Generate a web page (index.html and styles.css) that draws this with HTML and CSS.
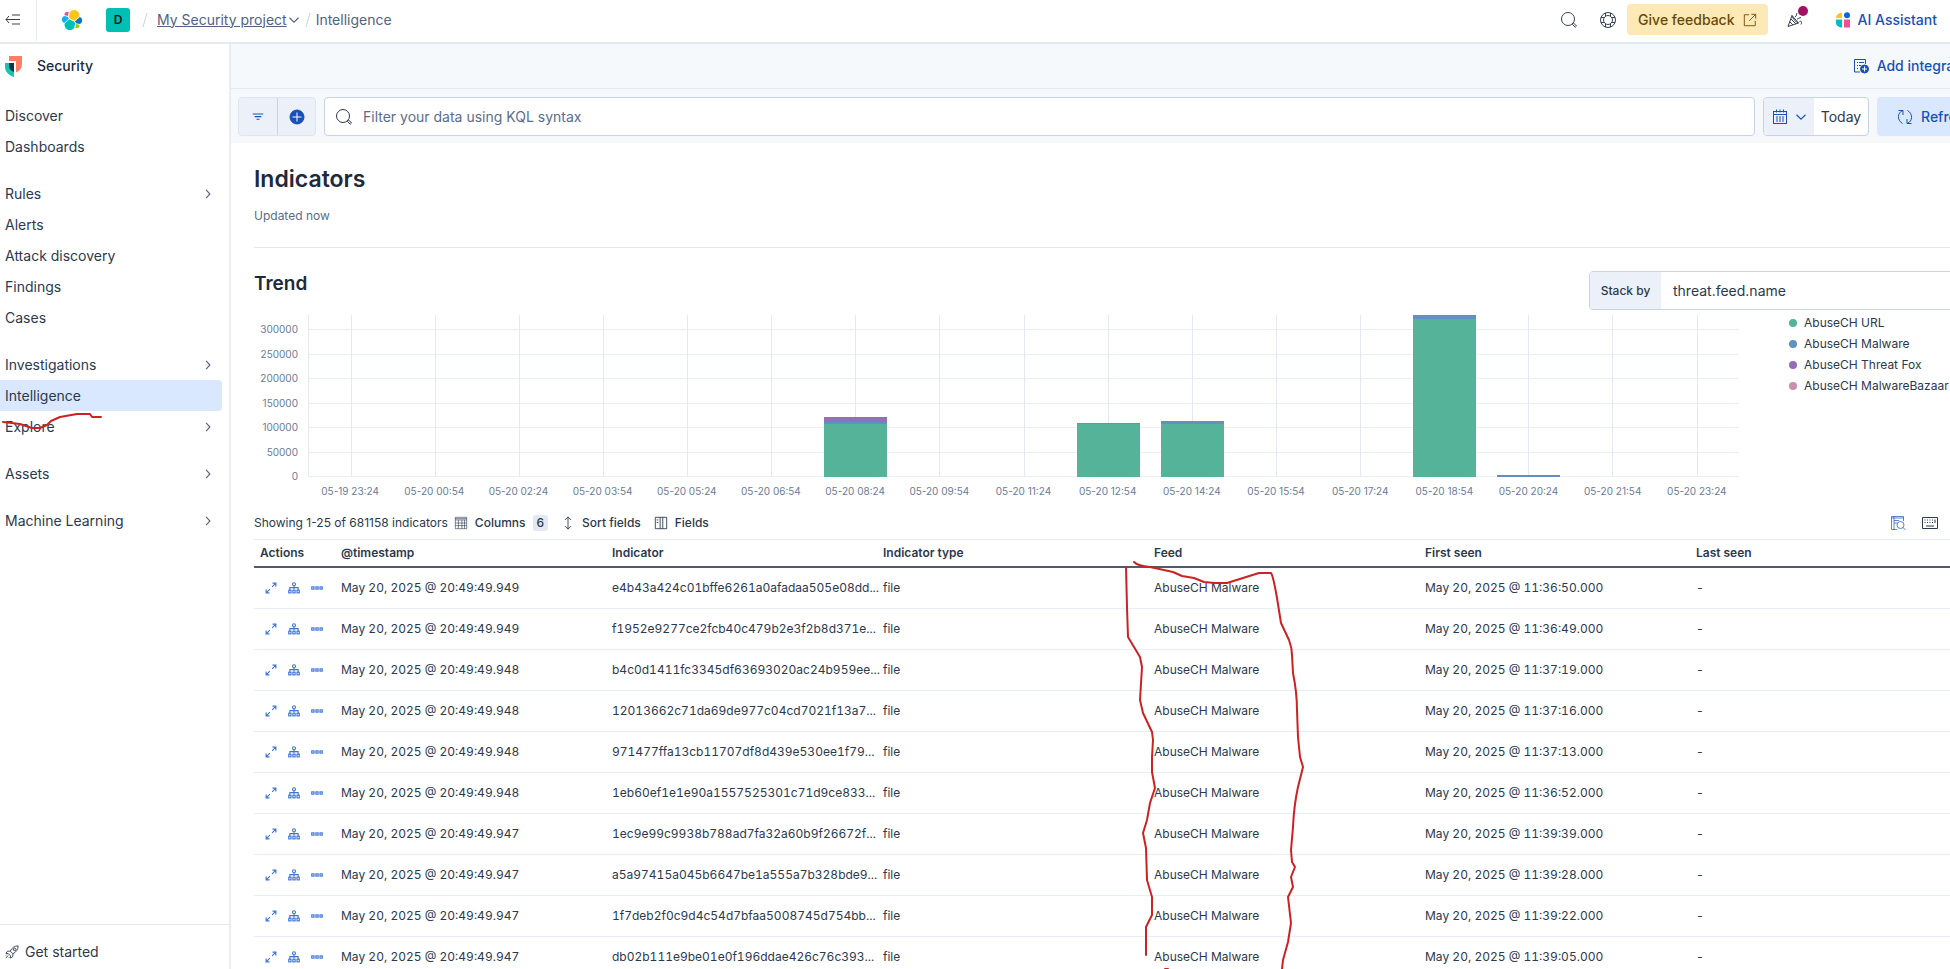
FILE: index.html
```html
<!DOCTYPE html>
<html lang="en">
<head>
    <meta charset="UTF-8">
    <meta name="viewport" content="width=device-width, initial-scale=1.0">
    <title>Indicators - Intelligence</title>
    <link rel="stylesheet" href="styles.css">
</head>
<body>

    <!-- Shared icons -->
    <svg class="sprite" aria-hidden="true">
        <symbol id="i-right" viewBox="0 0 16 16"><path d="M5.500 2.500l5 5.500-5 5.500"/></symbol>
        <symbol id="i-down" viewBox="0 0 16 16"><path d="M2 5l6 6 6-6"/></symbol>
        <symbol id="i-search" viewBox="0 0 16 16"><circle cx="7" cy="7" r="6.500"/><path d="M11.500 11.500l1-.5 3 3-1.200 1.200-2.900-2.800z"/></symbol>
        <symbol id="i-expand" viewBox="0 0 16 16"><path d="M9.500 6.500l5-5M10 1.500h4.500V6M6.500 9.500l-5 5M1.500 10v4.500H6"/></symbol>
        <symbol id="i-tree" viewBox="0 0 16 16"><circle cx="8" cy="3" r="2"/><path d="M8 5v5M2.500 10.500v-3h11v3"/><rect x="1" y="11" width="3" height="3.500"/><rect x="6.500" y="11" width="3" height="3.500"/><rect x="12" y="11" width="3" height="3.500"/></symbol>
        <symbol id="i-dots" viewBox="0 0 16 16"><rect x="1" y="6.500" width="3" height="3"/><rect x="6.500" y="6.500" width="3" height="3"/><rect x="12" y="6.500" width="3" height="3"/></symbol>
    </svg>

    <header class="header">
        <button class="icon-btn nav-toggle" aria-label="Collapse navigation">
            <svg viewBox="0 0 16 16" class="icon"><path d="M4 4L1 7.500 4 11M1 7.500h14M7 3h8M7 12h8"/></svg>
        </button>
        <a href="#" class="logo" aria-label="Elastic home">
            <svg viewBox="0 0 32 32">
                <path fill="#FEC514" d="M12.580 13.787l7.002 3.211 7.066-6.213a7.849 7.849 0 0 0 .152-1.557c0-4.287-3.464-7.775-7.722-7.775a7.687 7.687 0 0 0-6.366 3.381l-1.176 6.140z"/>
                <path fill="#00BFB3" d="M5.333 21.228a7.960 7.960 0 0 0-.151 1.572c0 4.300 3.475 7.799 7.747 7.799 2.572 0 4.975-1.285 6.423-3.436l1.166-6.116-1.556-2.995-7.030-3.223z"/>
                <path fill="#F04E98" d="M5.288 9.067l4.800 1.143L11.140 4.720a3.784 3.784 0 0 0-2.282-.768c-2.080 0-3.773 1.705-3.773 3.800 0 .464.082.907.203 1.315z"/>
                <path fill="#1BA9F5" d="M4.871 10.215c-2.145.716-3.624 2.773-3.624 5.054 0 2.221 1.360 4.204 3.403 4.990l6.734-6.130-1.236-2.661z"/>
                <path fill="#93C90E" d="M20.873 27.163a3.765 3.765 0 0 0 2.274.776c2.080 0 3.773-1.706 3.773-3.800 0-.461-.080-.905-.203-1.314l-4.797-1.130z"/>
                <path fill="#0077CC" d="M21.848 20.563l5.280 1.245c2.146-.715 3.625-2.773 3.625-5.055 0-2.216-1.363-4.196-3.408-4.982l-6.905 6.090z"/>
            </svg>
        </a>
        <button class="avatar" aria-label="Default space">D</button>
        <nav class="breadcrumbs" aria-label="Breadcrumb">
            <svg viewBox="0 0 6 16" class="slash"><path d="M5 1L1 15"/></svg>
            <a href="#">My Security project</a>
            <svg class="icon icon-s crumb-arrow"><use href="#i-down"/></svg>
            <svg viewBox="0 0 6 16" class="slash"><path d="M5 1L1 15"/></svg>
            <span>Intelligence</span>
        </nav>
        <div class="header-right">
            <button class="icon-btn" aria-label="Search"><svg class="icon"><use href="#i-search"/></svg></button>
            <button class="icon-btn" aria-label="Help">
                <svg viewBox="0 0 16 16" class="icon"><circle cx="8" cy="8" r="7.500"/><circle cx="8" cy="8" r="4.500"/><path d="M5.500 1v3.200M10.500 1v3.200M5.500 11.800V15M10.500 11.800V15M1 5.500h3.200M1 10.500h3.200M11.800 5.500H15M11.800 10.500H15"/></svg>
            </button>
            <a href="#" class="feedback">Give feedback
                <svg viewBox="0 0 16 16" class="icon icon-m"><path d="M7 2H1.500v12.500H14V9M9.500 1.500h5v5M14.500 1.500L7 9"/></svg>
            </a>
            <button class="icon-btn news" aria-label="What's new">
                <svg viewBox="0 0 16 16" class="icon"><path d="M5 3.500L1 14.500l10.500-3.500zM4 7l5 5M3 10l3 3M5 3.500c.5 3 3 6 6.500 7.500M8 5c2-1 1-2.500 2-4M10 7.500c1.500-2 2.500-1 4-2M12.500 9.500c2-1 2.500 1 1.500 3"/></svg>
                <span class="dot"></span>
            </button>
            <button class="ai-btn">
                <svg viewBox="0 0 14 16" class="ai-icon"><path fill="#FEC514" d="M6 1v5H0c0-3 2.500-5 6-5z"/><circle cx="11" cy="3.300" r="3" fill="#0B64DD"/><path fill="#00BFB3" d="M0 7.500h6v8c-4 0-6-2.500-6-4.500z"/><rect x="8" y="7.500" width="6" height="8" fill="#F04E98"/></svg>
                AI Assistant
            </button>
        </div>
    </header>

    <div class="layout">
        <aside class="sidebar">
            <a href="#" class="solution">
                <svg viewBox="0 0 17 21"><path fill="#FF7E62" d="M4 0h13v8c0 4-2 7-6 8.500V5H4z"/><path fill="#16C5B0" d="M0 7h9v14C3 19 0 15 0 11z"/><path fill="#163251" d="M4 7h5v9c-3-1-5-3-5-6z"/></svg>
                Security
            </a>
            <nav class="nav" aria-label="Security">
                <ul>
                    <li><a href="#">Discover</a></li>
                    <li><a href="#">Dashboards</a></li>
                </ul>
                <ul>
                    <li><a href="#">Rules <svg class="icon icon-s"><use href="#i-right"/></svg></a></li>
                    <li><a href="#">Alerts</a></li>
                    <li><a href="#">Attack discovery</a></li>
                    <li><a href="#">Findings</a></li>
                    <li><a href="#">Cases</a></li>
                </ul>
                <ul>
                    <li><a href="#">Investigations <svg class="icon icon-s"><use href="#i-right"/></svg></a></li>
                    <li><a href="#" class="active" aria-current="page">Intelligence</a></li>
                    <li><a href="#">Explore <svg class="icon icon-s"><use href="#i-right"/></svg></a></li>
                </ul>
                <ul>
                    <li><a href="#">Assets <svg class="icon icon-s"><use href="#i-right"/></svg></a></li>
                </ul>
                <ul>
                    <li><a href="#">Machine Learning <svg class="icon icon-s"><use href="#i-right"/></svg></a></li>
                </ul>
            </nav>
            <a href="#" class="get-started">
                <svg viewBox="0 0 16 16" class="icon icon-m"><path d="M15 1c-4 0-7 2-9 6l3 3c4-2 6-5 6-9zM6 7H3L1 9.500l3 .5M9 10v3l-2.500 2-.5-3M4 10l2 2M3.500 12l-2.500 3M10 5l1 1M1 12l1-1M4 15l1-1"/><circle cx="11" cy="5" r="1.500"/></svg>
                Get started
            </a>
        </aside>

        <main class="main">
            <div class="page">
                <div class="topbar">
                    <a href="#" class="add-link">
                        <svg viewBox="0 0 16 16" class="icon"><path d="M7 14H1.500V1.500h11V6M4 4.500h1M6 4.500h5M4 7.500h1M6 7.500h2M4 10.500h1"/><circle cx="11.500" cy="11" r="4" class="solid"/><path class="plus" d="M11.500 8.500v5M9 11h5"/></svg>
                        Add integrations
                    </a>
                </div>

                <div class="query-bar">
                    <div class="filter-group">
                        <button aria-label="Saved queries"><svg viewBox="0 0 16 16" class="icon icon-s"><path d="M1 4h14M3.500 7.500h9M6 11h4"/></svg></button>
                        <button aria-label="Add filter"><svg viewBox="0 0 16 16" class="icon"><circle cx="8" cy="8" r="7" class="solid"/><path class="plus" d="M8 3.500v9M3.500 8h9"/></svg></button>
                    </div>
                    <label class="search">
                        <svg class="icon"><use href="#i-search"/></svg>
                        <input type="text" placeholder="Filter your data using KQL syntax" aria-label="Filter your data using KQL syntax">
                    </label>
                    <div class="date-picker">
                        <button class="quick" aria-label="Date quick select">
                            <svg viewBox="0 0 16 16" class="icon"><rect x="1.500" y="2.500" width="13" height="12"/><path d="M1.500 5.500h13M4.500 .5v3M8 .5v3M11.500 .5v3M4 8h2M7 8h2M10 8h2M4 10h2M7 10h2M10 10h2M4 12h2M7 12h2M10 12h2"/></svg>
                            <svg class="icon icon-s"><use href="#i-down"/></svg>
                        </button>
                        <button class="today">Today</button>
                    </div>
                    <button class="refresh">
                        <svg viewBox="0 0 16 16" class="icon"><path d="M6 1.500c-6 2-6 10-.5 13M1.500 1.500H6V6M10 14.500c6-2 6-10 .5-13M14.500 14.500H10V10"/></svg>
                        Refresh
                    </button>
                </div>

                <div class="content">
                    <h1>Indicators</h1>
                    <p class="updated">Updated now</p>

                    <section class="trend">
                        <div class="trend-head">
                            <h2>Trend</h2>
                            <div class="stack-by">
                                <label for="stack">Stack by</label>
                                <select id="stack"><option>threat.feed.name</option></select>
                                <svg class="icon icon-s"><use href="#i-down"/></svg>
                            </div>
                        </div>

                        <div class="chart">
                            <div class="y-axis">
                                <span>300000</span><span>250000</span><span>200000</span><span>150000</span><span>100000</span><span>50000</span><span>0</span>
                            </div>
                            <div class="plot-wrap">
                                <div class="plot">
                                    <div class="grid-lines"><i></i><i></i><i></i><i></i><i></i><i></i><i></i></div>
                                    <div class="slot"></div>
                                    <div class="slot"></div>
                                    <div class="slot"></div>
                                    <div class="slot"></div>
                                    <div class="slot"></div>
                                    <div class="slot"></div>
                                    <div class="slot"><b class="fox" style="height:3.1%"></b><b class="malware" style="height:1%"></b><b class="url" style="height:32.8%"></b></div>
                                    <div class="slot"></div>
                                    <div class="slot"></div>
                                    <div class="slot"><b class="malware" style="height:0.4%"></b><b class="url" style="height:32.9%"></b></div>
                                    <div class="slot"><b class="malware" style="height:2.2%"></b><b class="url" style="height:32.5%"></b></div>
                                    <div class="slot"></div>
                                    <div class="slot"></div>
                                    <div class="slot"><b class="malware" style="height:2.5%"></b><b class="url" style="height:97.5%"></b></div>
                                    <div class="slot"><b class="malware" style="height:1.3%"></b></div>
                                    <div class="slot"></div>
                                    <div class="slot"></div>
                                </div>
                                <div class="x-axis">
                                    <span>05-19 23:24</span><span>05-20 00:54</span><span>05-20 02:24</span><span>05-20 03:54</span><span>05-20 05:24</span><span>05-20 06:54</span><span>05-20 08:24</span><span>05-20 09:54</span><span>05-20 11:24</span><span>05-20 12:54</span><span>05-20 14:24</span><span>05-20 15:54</span><span>05-20 17:24</span><span>05-20 18:54</span><span>05-20 20:24</span><span>05-20 21:54</span><span>05-20 23:24</span>
                                </div>
                            </div>
                            <ul class="legend">
                                <li><i class="url"></i>AbuseCH URL</li>
                                <li><i class="malware"></i>AbuseCH Malware</li>
                                <li><i class="fox"></i>AbuseCH Threat Fox</li>
                                <li><i class="bazaar"></i>AbuseCH MalwareBazaar</li>
                            </ul>
                        </div>
                    </section>

                    <div class="toolbar">
                        <span>Showing 1-25 of 681158 indicators</span>
                        <button class="tool"><svg viewBox="0 0 16 16" class="icon icon-m thin"><path d="M1.500 1.500h13v13h-13zM1.500 4.500h13M1.500 3h13M5 4.500v10M9 4.500v10M12 4.500v10M1.500 8h13M1.500 11h13"/></svg>Columns<span class="badge">6</span></button>
                        <button class="tool"><svg viewBox="0 0 16 16" class="icon icon-m"><path d="M8 1v14M4.500 4.500L8 1l3.500 3.500M4.500 11.500L8 15l3.500-3.500"/></svg>Sort fields</button>
                        <button class="tool"><svg viewBox="0 0 16 16" class="icon icon-m"><path d="M1.500 1.500h13v13h-13zM7 1.500v13M10 1.500v13M3 4.500h2M3 7.500h2"/></svg>Fields</button>
                        <div class="toolbar-right">
                            <button class="icon-btn blue" aria-label="Inspect"><svg viewBox="0 0 16 16" class="icon thin"><path d="M7 14.500H1.500v-13h12V6M1.500 3h12M4 1.500v13M4 5.500h5M4 8h3"/><circle cx="10.500" cy="10" r="3.500"/><path d="M13 12.500l2.500 2.500"/></svg></button>
                            <button class="icon-btn" aria-label="Keyboard shortcuts"><svg viewBox="0 0 16 16" class="icon"><path d="M.5 2.500h15v11H.5zM2.500 5h1M5 5h1M7.500 5h1M10 5h1M2.500 7.500h1M5 7.500h1M7.500 7.500h1M10 7.500h1M4 11h8M13 4.500v3.500"/></svg></button>
                        </div>
                    </div>

                    <div class="table-wrap">
                        <table class="grid">
                            <thead>
                                <tr><th class="col-actions">Actions</th><th>@timestamp</th><th>Indicator</th><th>Indicator type</th><th>Feed</th><th>First seen</th><th>Last seen</th></tr>
                            </thead>
                            <tbody>
                                <tr><td><div class="actions"><button aria-label="View details"><svg><use href="#i-expand"/></svg></button><button aria-label="Investigate in timeline"><svg><use href="#i-tree"/></svg></button><button aria-label="More actions"><svg><use href="#i-dots"/></svg></button></div></td><td>May 20, 2025 @ 20:49:49.949</td><td>e4b43a424c01bffe6261a0afadaa505e08dd...</td><td>file</td><td>AbuseCH Malware</td><td>May 20, 2025 @ 11:36:50.000</td><td>-</td></tr>
                                <tr><td><div class="actions"><button aria-label="View details"><svg><use href="#i-expand"/></svg></button><button aria-label="Investigate in timeline"><svg><use href="#i-tree"/></svg></button><button aria-label="More actions"><svg><use href="#i-dots"/></svg></button></div></td><td>May 20, 2025 @ 20:49:49.949</td><td>f1952e9277ce2fcb40c479b2e3f2b8d371e...</td><td>file</td><td>AbuseCH Malware</td><td>May 20, 2025 @ 11:36:49.000</td><td>-</td></tr>
                                <tr><td><div class="actions"><button aria-label="View details"><svg><use href="#i-expand"/></svg></button><button aria-label="Investigate in timeline"><svg><use href="#i-tree"/></svg></button><button aria-label="More actions"><svg><use href="#i-dots"/></svg></button></div></td><td>May 20, 2025 @ 20:49:49.948</td><td>b4c0d1411fc3345df63693020ac24b959ee...</td><td>file</td><td>AbuseCH Malware</td><td>May 20, 2025 @ 11:37:19.000</td><td>-</td></tr>
                                <tr><td><div class="actions"><button aria-label="View details"><svg><use href="#i-expand"/></svg></button><button aria-label="Investigate in timeline"><svg><use href="#i-tree"/></svg></button><button aria-label="More actions"><svg><use href="#i-dots"/></svg></button></div></td><td>May 20, 2025 @ 20:49:49.948</td><td>12013662c71da69de977c04cd7021f13a7...</td><td>file</td><td>AbuseCH Malware</td><td>May 20, 2025 @ 11:37:16.000</td><td>-</td></tr>
                                <tr><td><div class="actions"><button aria-label="View details"><svg><use href="#i-expand"/></svg></button><button aria-label="Investigate in timeline"><svg><use href="#i-tree"/></svg></button><button aria-label="More actions"><svg><use href="#i-dots"/></svg></button></div></td><td>May 20, 2025 @ 20:49:49.948</td><td>971477ffa13cb11707df8d439e530ee1f79...</td><td>file</td><td>AbuseCH Malware</td><td>May 20, 2025 @ 11:37:13.000</td><td>-</td></tr>
                                <tr><td><div class="actions"><button aria-label="View details"><svg><use href="#i-expand"/></svg></button><button aria-label="Investigate in timeline"><svg><use href="#i-tree"/></svg></button><button aria-label="More actions"><svg><use href="#i-dots"/></svg></button></div></td><td>May 20, 2025 @ 20:49:49.948</td><td>1eb60ef1e1e90a1557525301c71d9ce833...</td><td>file</td><td>AbuseCH Malware</td><td>May 20, 2025 @ 11:36:52.000</td><td>-</td></tr>
                                <tr><td><div class="actions"><button aria-label="View details"><svg><use href="#i-expand"/></svg></button><button aria-label="Investigate in timeline"><svg><use href="#i-tree"/></svg></button><button aria-label="More actions"><svg><use href="#i-dots"/></svg></button></div></td><td>May 20, 2025 @ 20:49:49.947</td><td>1ec9e99c9938b788ad7fa32a60b9f26672f...</td><td>file</td><td>AbuseCH Malware</td><td>May 20, 2025 @ 11:39:39.000</td><td>-</td></tr>
                                <tr><td><div class="actions"><button aria-label="View details"><svg><use href="#i-expand"/></svg></button><button aria-label="Investigate in timeline"><svg><use href="#i-tree"/></svg></button><button aria-label="More actions"><svg><use href="#i-dots"/></svg></button></div></td><td>May 20, 2025 @ 20:49:49.947</td><td>a5a97415a045b6647be1a555a7b328bde9...</td><td>file</td><td>AbuseCH Malware</td><td>May 20, 2025 @ 11:39:28.000</td><td>-</td></tr>
                                <tr><td><div class="actions"><button aria-label="View details"><svg><use href="#i-expand"/></svg></button><button aria-label="Investigate in timeline"><svg><use href="#i-tree"/></svg></button><button aria-label="More actions"><svg><use href="#i-dots"/></svg></button></div></td><td>May 20, 2025 @ 20:49:49.947</td><td>1f7deb2f0c9d4c54d7bfaa5008745d754bb...</td><td>file</td><td>AbuseCH Malware</td><td>May 20, 2025 @ 11:39:22.000</td><td>-</td></tr>
                                <tr><td><div class="actions"><button aria-label="View details"><svg><use href="#i-expand"/></svg></button><button aria-label="Investigate in timeline"><svg><use href="#i-tree"/></svg></button><button aria-label="More actions"><svg><use href="#i-dots"/></svg></button></div></td><td>May 20, 2025 @ 20:49:49.947</td><td>db02b111e9be01e0f196ddae426c76c393...</td><td>file</td><td>AbuseCH Malware</td><td>May 20, 2025 @ 11:39:05.000</td><td>-</td></tr>
                            </tbody>
                        </table>
                    </div>
                </div>
            </div>
        </main>
    </div>

    <!-- Red pen marks over the page -->
    <svg class="pen" viewBox="0 0 1400 969" aria-hidden="true">
        <path d="M3 422L20 424 32 428H40L47 425 51 421 60 417 77 414H90L92 417H101"/>
        <path d="M1134 562Q1138 566 1150 567L1173 572 1182 576 1194 578 1204 582 1215 583 1227 583 1243 578 1259 573H1271Q1273 575 1277 598L1281 623 1289 640Q1292 648 1292 655L1293 673Q1297 693 1297 710L1298 737 1300 757 1303 767 1298 787Q1294 805 1293 827L1291 850 1292 862 1295 867 1291 877 1293 887 1288 897 1291 923 1288 942 1283 960 1282 969"/>
        <path d="M1126 567L1127 607 1128 637 1140 657 1142 667 1140 700 1143 713 1152 732 1153 740 1152 757V772L1155 788 1150 803 1147 820 1143 833 1146 848 1147 880 1152 897V915L1146 927V955"/>
        <path d="M1165 969H1168"/>
    </svg>

</body>
</html>
```
FILE: styles.css
```css
* {
    box-sizing: border-box;
}

body {
    margin: 0;
    height: 100vh;
    display: flex;
    flex-direction: column;
    position: relative;
    overflow: hidden;
    font-family: Inter, "Liberation Sans", sans-serif;
    font-size: 14px;
    line-height: 20px;
    color: #2b394f;
    background-color: #fff;
}

button, input, select {
    font: inherit;
    color: inherit;
    border: 0;
    padding: 0;
    background: none;
}

button {
    cursor: pointer;
}

a {
    color: inherit;
    text-decoration: none;
}

ul {
    list-style: none;
    margin: 0;
    padding: 0;
}

svg {
    display: block;
    flex: none;
    fill: none;
    stroke: none;
}

.sprite {
    position: absolute;
    width: 0;
    height: 0;
}

.icon {
    width: 16px;
    height: 16px;
    stroke: currentColor;
}

.icon-m {
    width: 14px;
    height: 14px;
}

.icon-s {
    width: 12px;
    height: 12px;
    stroke-width: 1.5;
}

.thin {
    stroke-width: 0.7;
}

.solid {
    fill: currentColor;
}

.plus {
    stroke: #fff;
}

.icon-btn {
    display: flex;
    align-items: center;
    justify-content: center;
}

/* Header */
.header {
    height: 44px;
    flex: none;
    display: flex;
    align-items: center;
    padding: 0 13px 3px 0;
    border-bottom: 2px solid #e5e9f0;
    color: #516381;
}

.nav-toggle {
    width: 37px;
    height: 42px;
    padding-right: 15px;
    border-right: 1px solid #e3e8f2;
    justify-content: flex-end;
    color: #343f52;
}

.logo svg {
    width: 22px;
    height: 22px;
    margin-left: 24px;
}

.avatar {
    width: 24px;
    height: 24px;
    margin-left: 23px;
    border-radius: 3px;
    background-color: #00bfb3;
    color: #07101f;
    font-size: 12px;
    font-weight: 600;
}

.breadcrumbs {
    display: flex;
    align-items: center;
    margin-left: 12px;
}

.breadcrumbs a {
    margin-left: 9px;
    text-decoration: underline;
}

.breadcrumbs span {
    margin-left: 5px;
}

.crumb-arrow {
    margin: 0 5px 0 1px;
}

.slash {
    width: 6px;
    height: 16px;
    stroke: #cad3e2;
}

.header-right {
    display: flex;
    align-items: center;
    margin-left: auto;
    color: #343f52;
}

.header-right .icon-btn {
    width: 39px;
    height: 31px;
}

.feedback {
    display: flex;
    align-items: center;
    gap: 8px;
    height: 31px;
    padding: 0 11px;
    border-radius: 4px;
    background-color: #fde9b5;
    color: #6a4906;
    font-weight: 500;
}

.header-right .news {
    position: relative;
    width: 54px;
}

.dot {
    position: absolute;
    top: 2px;
    right: 14px;
    width: 10px;
    height: 10px;
    border-radius: 50%;
    background-color: #a11262;
}

.ai-btn {
    display: flex;
    align-items: center;
    gap: 8px;
    margin-left: 14px;
    color: #1750ba;
    font-weight: 500;
}

.ai-icon {
    width: 14px;
    height: 16px;
}

/* Sidebar */
.layout {
    flex: 1;
    min-height: 0;
    display: flex;
}

.sidebar {
    width: 231px;
    flex: none;
    display: flex;
    flex-direction: column;
    border-right: 2px solid #e9edf3;
}

.solution {
    display: flex;
    align-items: center;
    gap: 15px;
    height: 44px;
    padding-left: 5px;
    font-weight: 500;
    color: #1d2a3e;
}

.solution svg {
    width: 17px;
    height: 21px;
}

.nav {
    flex: 1;
    display: flex;
    flex-direction: column;
    gap: 16px;
    padding: 12px 7px 0 0;
}

.nav a {
    display: flex;
    align-items: center;
    justify-content: space-between;
    height: 31px;
    padding: 0 8px 0 5px;
    border-radius: 0 4px 4px 0;
}

.nav .active {
    background-color: #d9e8ff;
}

.nav .icon {
    color: #516381;
}

.get-started {
    display: flex;
    align-items: center;
    gap: 6px;
    height: 45px;
    padding: 10px 0 0 5px;
    border-top: 1px solid #e3e8f2;
}

/* Main, the page is a little wider than the window */
.main {
    flex: 1;
    min-width: 0;
    overflow: hidden;
}

.page {
    margin-right: -58px;
}

.topbar {
    display: flex;
    align-items: center;
    justify-content: flex-end;
    height: 45px;
    padding: 0 21px;
    border-bottom: 1px solid #e3e8f2;
    background-color: #f6f9fc;
}

.add-link {
    display: flex;
    align-items: center;
    gap: 8px;
    color: #1750ba;
    font-weight: 500;
}

.query-bar {
    display: flex;
    gap: 8px;
    padding: 8px 8px 7px 7px;
    background-color: #f6f9fc;
}

.filter-group {
    display: flex;
    height: 39px;
    overflow: hidden;
    border: 1px solid #dfe5ef;
    border-radius: 4px;
    background-color: #ecf1f9;
    color: #1750ba;
}

.filter-group button {
    display: flex;
    align-items: center;
    justify-content: center;
    width: 38px;
}

.filter-group button + button {
    border-left: 1px solid #cad3e2;
}

.search {
    flex: 1;
    display: flex;
    align-items: center;
    gap: 11px;
    height: 39px;
    padding: 0 11px;
    border: 1px solid #cad3e2;
    border-radius: 4px;
    background-color: #fff;
}

.search input {
    flex: 1;
    outline: 0;
}

.search input::placeholder {
    color: #5a6d8c;
    opacity: 1;
}

.date-picker {
    display: flex;
    height: 39px;
    overflow: hidden;
    border: 1px solid #cad3e2;
    border-radius: 4px;
    background-color: #fff;
}

.quick {
    display: flex;
    align-items: center;
    gap: 7px;
    width: 50px;
    padding-left: 8px;
    background-color: #ecf1f9;
    color: #1750ba;
}

.today {
    width: 54px;
}

.refresh {
    display: flex;
    align-items: center;
    gap: 8px;
    width: 123px;
    height: 39px;
    padding-left: 20px;
    border-radius: 4px;
    background-color: #d9e8ff;
    color: #1750ba;
    font-weight: 500;
}

.content {
    padding: 20px 24px 0 23px;
}

h1 {
    margin: 0;
    font-size: 23px;
    line-height: 32px;
    font-weight: 600;
    color: #1d2a3e;
}

.updated {
    margin: 0;
    padding: 12px 0 22px;
    border-bottom: 1px solid #e3e8f2;
    font-size: 12px;
    line-height: 18px;
    color: #5a6d8c;
}

.trend {
    padding-top: 23px;
}

.trend-head {
    display: flex;
    align-items: flex-start;
    justify-content: space-between;
}

h2 {
    margin: 0;
    font-size: 19px;
    line-height: 26px;
    font-weight: 600;
    color: #1d2a3e;
}

.stack-by {
    display: flex;
    align-items: center;
    width: 395px;
    height: 39px;
    padding-right: 20px;
    overflow: hidden;
    border: 1px solid #cad3e2;
    border-radius: 4px;
}

.stack-by label {
    width: 71px;
    line-height: 37px;
    text-align: center;
    background-color: #ecf1f9;
    font-size: 12px;
    font-weight: 500;
}

.stack-by select {
    flex: 1;
    padding-left: 12px;
    appearance: none;
}

/* Chart */
.chart {
    display: flex;
    padding-top: 5px;
    font-size: 10px;
    line-height: 14px;
    color: #6a7b98;
}

.y-axis,
.grid-lines {
    display: grid;
    grid-template-rows: 15px repeat(6, 1fr);
    height: 162px;
}

.y-axis {
    width: 54px;
    padding-right: 10px;
    text-align: right;
}

.y-axis span {
    align-self: end;
    margin-bottom: -6px;
}

.plot-wrap {
    flex: 1;
}

.plot {
    position: relative;
    display: flex;
    height: 162px;
    border-left: 1px solid #e3e8f2;
}

.grid-lines {
    position: absolute;
    inset: 0;
}

.grid-lines i {
    border-bottom: 1px solid #eaeef5;
}

.slot {
    position: relative;
    flex: 1;
    display: flex;
    flex-direction: column;
    justify-content: flex-end;
    align-items: center;
    background: linear-gradient(#e3e8f2, #e3e8f2) center / 1px 100% no-repeat;
}

.slot b {
    width: 75%;
}

.url {
    background-color: #54b399;
}

.malware {
    background-color: #6092c0;
}

.fox {
    background-color: #9170b8;
}

.bazaar {
    background-color: #ca8eae;
}

.x-axis {
    display: flex;
    padding-top: 7px;
}

.x-axis span {
    flex: 1;
    text-align: center;
}

.legend {
    width: 245px;
    padding-left: 50px;
    font-size: 12px;
    line-height: 16px;
    color: #2b394f;
}

.legend li {
    display: flex;
    align-items: center;
    gap: 7px;
    height: 16px;
    margin-bottom: 5px;
}

.legend i {
    width: 8px;
    height: 8px;
    border-radius: 50%;
}

/* Table */
.toolbar {
    display: flex;
    align-items: center;
    height: 42px;
    padding-top: 8px;
    border-bottom: 1px solid #e9edf5;
    font-size: 12px;
}

.tool {
    display: flex;
    align-items: center;
    gap: 7px;
    margin-left: 6px;
    margin-right: 7px;
    font-weight: 500;
}

.badge {
    padding: 0 4px;
    border-radius: 3px;
    line-height: 16px;
    background-color: #e3e8f2;
}

.toolbar-right {
    display: flex;
    gap: 16px;
    margin-left: auto;
    margin-right: 46px;
}

.blue {
    color: #1750ba;
}

.table-wrap {
    padding-right: 23px;
}

.grid {
    width: 100%;
    table-layout: fixed;
    border-collapse: separate;
    border-spacing: 0;
    font-size: 12px;
    line-height: 18px;
}

.grid th {
    height: 28px;
    padding: 0 6px;
    border-bottom: 2px solid #535b6b;
    text-align: left;
    font-weight: 600;
}

.grid td {
    height: 41px;
    padding: 0 6px;
    border-bottom: 1px solid #e9eef5;
    white-space: nowrap;
    font-variant-numeric: tabular-nums;
}

.grid .col-actions {
    width: 81px;
}

.actions {
    display: flex;
    gap: 11px;
    padding-left: 5px;
    color: #3f74d8;
}

.actions svg {
    width: 12px;
    height: 12px;
    stroke: currentColor;
    stroke-width: 1.5;
}

.pen {
    position: absolute;
    top: 0;
    left: 0;
    width: 1400px;
    height: 969px;
    stroke: #cc2222;
    stroke-width: 2;
    stroke-linecap: round;
    stroke-linejoin: round;
    pointer-events: none;
}
```
